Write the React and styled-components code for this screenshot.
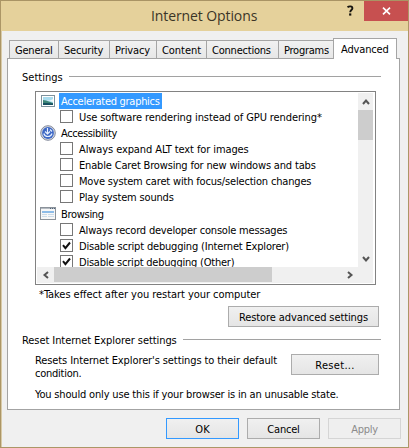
import React from "react";
import styled, { createGlobalStyle, css } from "styled-components";

const GlobalStyle = createGlobalStyle`
  * {
    box-sizing: border-box;
  }

  body {
    margin: 0;
    overflow: hidden;
  }

  button {
    margin: 0;
    padding: 0;
    font: inherit;
    color: inherit;
  }
`;

const Dialog = styled.div`
  width: 409px;
  height: 448px;
  display: flex;
  flex-direction: column;
  border: 1px solid #ac9666;
  border-top-color: #a99465;
  background-color: #f0f0f0;
  box-shadow: inset 1px 0 #d9cba8;
  color: #000;
  font-family: "DejaVu Sans Condensed", "DejaVu Sans", sans-serif;
  font-stretch: condensed;
  font-size: 11px;
  line-height: 16px;
  white-space: nowrap;
`;

const TitleBar = styled.header`
  height: 30px;
  flex: none;
  display: flex;
  align-items: flex-start;
  background-color: #e5d19b;
`;

const Title = styled.h1`
  margin: 0;
  width: 332px;
  padding-left: 150px;
  font-family: "Open Sans", sans-serif;
  font-stretch: normal;
  font-size: 14px;
  font-weight: 400;
  line-height: 29px;
  letter-spacing: -0.1px;
  color: #3b3527;
`;

const HelpButton = styled.button`
  width: 31px;
  height: 21px;
  border: 0;
  background: none;

  svg {
    display: block;
    margin: 0 0 1px 13px;
  }
`;

const CloseButton = styled.button`
  width: 44px;
  height: 20px;
  display: flex;
  align-items: center;
  justify-content: center;
  border: 0;
  background-color: #c75050;
`;

const Label = styled.span`
  letter-spacing: ${(props) => props.$spacing || 0}px;
`;

const Tabs = styled.nav`
  height: 27px;
  flex: none;
  display: flex;
  align-items: flex-end;
  padding-left: 8px;
  position: relative;
  z-index: 1;
`;

const Tab = styled.button`
  width: ${(props) => props.$width}px;
  height: 18px;
  padding: 2px 0 0 5px;
  text-align: left;
  line-height: 15px;
  border: 1px solid #a5a5a5;
  border-bottom: 0;
  border-right: 0;
  background: linear-gradient(#f1f1f1, #e7e7e7);

  ${(props) =>
    props.$active &&
    css`
      height: 21px;
      margin-bottom: -1px;
      padding: 0 0 0 7px;
      border-right: 1px solid #a5a5a5;
      background: #fff;
    `}
`;

const Panel = styled.main`
  width: 393px;
  height: 352px;
  flex: none;
  margin-left: 6px;
  padding: 10px 0 0 14px;
  border: 1px solid #a3a3a3;
  background-color: #fff;
`;

const GroupTitle = styled.div`
  width: 359px;
  height: 16px;
  display: flex;
  align-items: flex-start;
  gap: 6px;
  line-height: 18px;

  &::after {
    content: "";
    height: 1px;
    flex: 1;
    margin-top: 7px;
    background-color: #a2a2a2;
  }
`;

const ListBox = styled.div`
  width: 341px;
  height: 194px;
  margin: 6px 0 0 13px;
  padding: 1px;
  display: grid;
  grid-template-columns: 321px 15px;
  grid-template-rows: 174px 16px;
  border: 1px solid #828282;
`;

const List = styled.div`
  overflow: hidden;
  padding-left: 3px;
`;

const Category = styled.div`
  height: ${(props) => (props.$tall ? 17 : 16)}px;
  display: flex;
  align-items: center;
  gap: 3px;

  svg {
    flex: none;
  }
`;

const CategoryName = styled.span`
  height: 16px;
  padding: 0 2px;
  line-height: 18px;
  letter-spacing: ${(props) => props.$spacing || 0}px;
  ${(props) =>
    props.$selected &&
    css`
      background-color: #3399ff;
      color: #fff;
    `}
`;

const Option = styled.div`
  height: 16px;
  display: flex;
  align-items: flex-start;
  gap: 6px;
  padding-left: 20px;
  line-height: 18px;
`;

const CheckBox = styled.span`
  width: 13px;
  height: 13px;
  flex: none;
  display: flex;
  margin-top: 1px;
  border: 1px solid #777;
  background-color: #fff;
`;

const ScrollBar = styled.div`
  display: flex;
  flex-direction: ${(props) => (props.$vertical ? "column" : "row")};
  background-color: #f0f0f0;
`;

const ScrollArrow = styled.button`
  width: ${(props) => (props.$vertical ? 15 : 17)}px;
  height: ${(props) => (props.$vertical ? 17 : 16)}px;
  flex: none;
  display: flex;
  align-items: center;
  justify-content: center;
  border: 0;
  background: none;
`;

const Thumb = styled.div`
  flex: none;
  width: ${(props) => props.$width}px;
  height: ${(props) => props.$height}px;
  margin: ${(props) => (props.$vertical ? "0 0 auto" : "0 auto 0 0")};
  background-color: #cdcdcd;
`;

const Note = styled.p`
  margin: 2px 0 3px 17px;
`;

const Button = styled.button`
  width: ${(props) => props.$width}px;
  height: 21px;
  flex: none;
  padding-top: 2px;
  line-height: 17px;
  border: 1px solid ${(props) => (props.$primary ? "#3399ff" : "#acacac")};
  background: linear-gradient(#f0f0f0, #e5e5e5);

  &:disabled {
    border-color: #d5d5d5;
    background: #efefef;
    color: #8b8b8b;
  }
`;

const RestoreRow = styled.div`
  display: flex;
  justify-content: flex-end;
  padding-right: 20px;
  margin-bottom: 5px;
`;

const ResetRow = styled.div`
  display: flex;
  align-items: flex-start;
  justify-content: space-between;
  padding: 6px 20px 0 13px;
`;

const Paragraph = styled.p`
  margin: 0;
  line-height: 13px;
`;

const Warning = styled.p`
  margin: 7px 0 0 13px;
`;

const Footer = styled.footer`
  display: flex;
  gap: 8px;
  padding: 8px 0 0 165px;
`;

const tabs = [
  { name: "General", width: 49, spacing: -0.2 },
  { name: "Security", width: 51, spacing: -0.2 },
  { name: "Privacy", width: 47, spacing: -0.1 },
  { name: "Content", width: 50, spacing: -0.05 },
  { name: "Connections", width: 72, spacing: -0.22 },
  { name: "Programs", width: 55, spacing: -0.25 },
  { name: "Advanced", width: 64, spacing: -0.15, active: true },
];

const PictureIcon = () => (
  <svg width="16" height="14" viewBox="0 0 16 14">
    <rect x="1.5" y="1.5" width="13" height="11" fill="#fff" stroke="#7e929d" />
    <rect x="3" y="3" width="10" height="8" fill="#a9dcee" />
    <path d="M3 5.5l3 .5 7 2V5l-3 1.5z" fill="#eef8fb" />
    <path d="M3 6l3 .5L13 9v2H3z" fill="#3d8577" />
    <path d="M3 9h4l6 .5V11H3z" fill="#174f61" />
  </svg>
);

const AccessIcon = () => (
  <svg width="16" height="16" viewBox="0 0 16 16">
    <circle cx="8" cy="8" r="7.3" fill="#d3d8e2" stroke="#858b9b" />
    <circle cx="8" cy="8" r="5.9" fill="#3c67c5" />
    <path
      d="M7.5 3v5.5M5 6.5L7.5 9 10 6.5M3.8 8.5c1 4 7 4 8.2 0M10 4.5l2 2"
      fill="none"
      stroke="#e7f0ff"
      strokeWidth="1.2"
    />
  </svg>
);

const WindowIcon = () => (
  <svg width="16" height="14" viewBox="0 0 16 14">
    <rect x=".5" y=".5" width="15" height="12" fill="#f7f7f7" stroke="#8b929a" />
    <path d="M1 1.5h14" stroke="#b4bac1" />
    <path d="M10 1.5h1M12 1.5h1M14 1.5h1" stroke="#50647a" />
    <path d="M2 5h12" stroke="#8dbce8" strokeWidth="2" />
    <path d="M2 7.5h5M8 7.5h6M2 9.5h5M8 9.5h6" stroke="#cbdbe9" />
  </svg>
);

const Check = () => (
  <svg width="11" height="11" viewBox="0 0 11 11">
    <path d="M2 5.2l2.4 2.9L9 2.5" fill="none" stroke="#111" strokeWidth="2" />
  </svg>
);

const Chevron = ({ d }) => (
  <svg width="8" height="8" viewBox="0 0 8 8">
    <path d={d} fill="none" stroke="#555" strokeWidth="2" />
  </svg>
);

const OptionRow = ({ children, checked, spacing }) => (
  <Option>
    <CheckBox>{checked && <Check />}</CheckBox>
    <Label $spacing={spacing}>{children}</Label>
  </Option>
);

function App() {
  return (
    <>
      <GlobalStyle />
      <Dialog>
        <TitleBar>
          <Title>Internet Options</Title>
          <HelpButton aria-label="Help">
            <svg width="9" height="12" viewBox="0 0 9 12">
              <path
                d="M1.5 2.2C3 1 6.4.8 6.4 3.2c0 1.8-2.2 1.8-2.2 4"
                fill="none"
                stroke="#17150f"
                strokeWidth="1.9"
              />
              <rect x="3.1" y="8.4" width="2.2" height="2.2" fill="#17150f" />
            </svg>
          </HelpButton>
          <CloseButton aria-label="Close">
            <svg width="9" height="8" viewBox="0 0 9 8">
              <path d="M1 .7l7 6.6M8 .7L1 7.3" stroke="#fff" strokeWidth="1.7" />
            </svg>
          </CloseButton>
        </TitleBar>
        <Tabs>
          {tabs.map((tab) => (
            <Tab key={tab.name} $width={tab.width} $active={tab.active}>
              <Label $spacing={tab.spacing}>{tab.name}</Label>
            </Tab>
          ))}
        </Tabs>
        <Panel>
          <GroupTitle>
            <Label>Settings</Label>
          </GroupTitle>
          <ListBox>
            <List>
              <Category>
                <PictureIcon />
                <CategoryName $selected $spacing={-0.28}>
                  Accelerated graphics
                </CategoryName>
              </Category>
              <OptionRow spacing={-0.1}>
                Use software rendering instead of GPU rendering*
              </OptionRow>
              <Category>
                <AccessIcon />
                <CategoryName $spacing={-0.38}>Accessibility</CategoryName>
              </Category>
              <OptionRow spacing={-0.1}>Always expand ALT text for images</OptionRow>
              <OptionRow spacing={-0.17}>
                Enable Caret Browsing for new windows and tabs
              </OptionRow>
              <OptionRow spacing={-0.17}>
                Move system caret with focus/selection changes
              </OptionRow>
              <OptionRow spacing={-0.18}>Play system sounds</OptionRow>
              <Category $tall>
                <WindowIcon />
                <CategoryName $spacing={-0.3}>Browsing</CategoryName>
              </Category>
              <OptionRow spacing={-0.19}>
                Always record developer console messages
              </OptionRow>
              <OptionRow checked spacing={-0.18}>
                Disable script debugging (Internet Explorer)
              </OptionRow>
              <OptionRow checked spacing={-0.22}>
                Disable script debugging (Other)
              </OptionRow>
            </List>
            <ScrollBar $vertical>
              <ScrollArrow $vertical aria-label="Scroll up">
                <Chevron d="M1 6l3-3.5L7 6" />
              </ScrollArrow>
              <Thumb $vertical $width={15} $height={30} />
              <ScrollArrow $vertical aria-label="Scroll down">
                <Chevron d="M1 2l3 3.5L7 2" />
              </ScrollArrow>
            </ScrollBar>
            <ScrollBar>
              <ScrollArrow aria-label="Scroll left">
                <Chevron d="M6 1L2.5 4 6 7" />
              </ScrollArrow>
              <Thumb $width={218} $height={15} />
              <ScrollArrow aria-label="Scroll right">
                <Chevron d="M2 1l3.5 3L2 7" />
              </ScrollArrow>
            </ScrollBar>
            <ScrollBar />
          </ListBox>
          <Note>
            <Label $spacing={-0.05}>*Takes effect after you restart your computer</Label>
          </Note>
          <RestoreRow>
            <Button $width={151}>
              <Label $spacing={-0.1}>Restore advanced settings</Label>
            </Button>
          </RestoreRow>
          <GroupTitle>
            <Label $spacing={-0.07}>Reset Internet Explorer settings</Label>
          </GroupTitle>
          <ResetRow>
            <Paragraph>
              <Label $spacing={-0.1}>
                Resets Internet Explorer's settings to their default
              </Label>
              <br />
              <Label $spacing={-0.25}>condition.</Label>
            </Paragraph>
            <Button $width={88}>
              <Label $spacing={0.3}>Reset...</Label>
            </Button>
          </ResetRow>
          <Warning>
            <Label $spacing={-0.17}>
              You should only use this if your browser is in an unusable state.
            </Label>
          </Warning>
        </Panel>
        <Footer>
          <Button $width={73} $primary>
            <Label>OK</Label>
          </Button>
          <Button $width={73}>
            <Label $spacing={-0.2}>Cancel</Label>
          </Button>
          <Button $width={73} disabled>
            <Label $spacing={-0.3}>Apply</Label>
          </Button>
        </Footer>
      </Dialog>
    </>
  );
}

export default App;
